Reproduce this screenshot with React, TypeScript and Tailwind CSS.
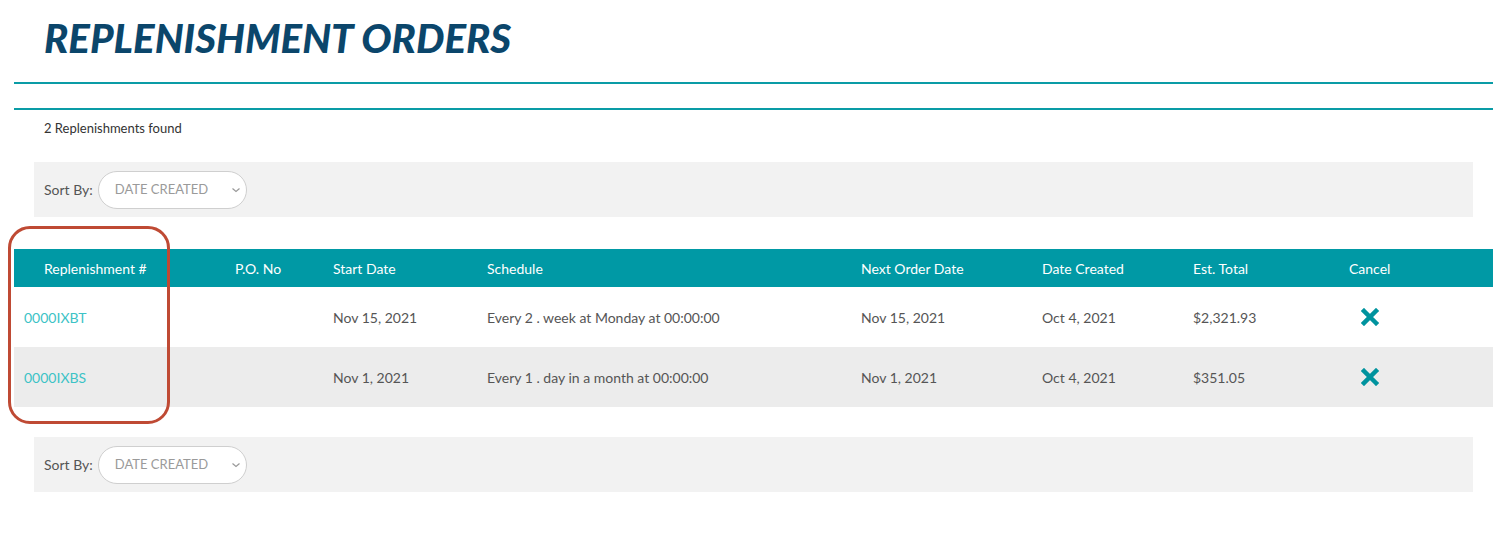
import React from "react";

const rows = [
  { id: "0000IXBT", po: "", start: "Nov 15, 2021", schedule: "Every 2 . week at Monday at 00:00:00", next: "Nov 15, 2021", created: "Oct 4, 2021", total: "$2,321.93" },
  { id: "0000IXBS", po: "", start: "Nov 1, 2021", schedule: "Every 1 . day in a month at 00:00:00", next: "Nov 1, 2021", created: "Oct 4, 2021", total: "$351.05" },
];

function SortBar() {
  return (
    <div className="mx-[20px] h-[55px] bg-[#f2f2f2] flex items-center pl-[10px] gap-[5px]">
      <span className="text-[14px] text-[#555]">Sort By:</span>
      <div className="w-[149px] h-[38px] rounded-full border border-[#cfcfcf] bg-white flex items-center justify-between pl-[16px] pr-[4px]">
        <span className="text-[13px] text-[#9a9a9a] uppercase">Date Created</span>
        <svg width="12" height="10" viewBox="0 0 12 10" fill="none" stroke="#999" strokeWidth="1.2"><path d="M2.5 3.5 L6 6.5 L9.5 3.5" /></svg>
      </div>
    </div>
  );
}

function XIcon() {
  return (
    <svg width="18" height="18" viewBox="0 0 18 18">
      <path d="M3 3 L15 15 M15 3 L3 15" stroke="#00939e" strokeWidth="4.5" strokeLinecap="square" />
    </svg>
  );
}

export default function App() {
  return (
    <div className="bg-white w-[1505px] h-[535px] relative" style={{ fontFamily: "Lato, 'Open Sans', sans-serif" }}>
      <div className="pl-[14px] w-[1493px]">
        <h1 className="pl-[30px] pt-[14px] h-[82px] text-[40.2px] leading-[48px] font-black italic text-[#0b466b] tracking-[0px]">REPLENISHMENT ORDERS</h1>
        <div className="h-[2px] bg-[#0a9ca6]" />
        <div className="h-[24px]" />
        <div className="h-[2px] bg-[#0a9ca6]" />
        <div className="pl-[30px] h-[52px] pt-[10px] text-[13px] leading-[16px] text-[#333]">2 Replenishments found</div>
        <SortBar />
        <div className="h-[32px]" />
        <div className="w-[1479px]">
          <div className="h-[38px] bg-[#0099a5] flex items-center text-[14px] text-white">
            <div className="w-[221px] pl-[30px]">Replenishment #</div>
            <div className="w-[98px]">P.O. No</div>
            <div className="w-[154px]">Start Date</div>
            <div className="w-[374px]">Schedule</div>
            <div className="w-[181px]">Next Order Date</div>
            <div className="w-[151px]">Date Created</div>
            <div className="w-[156px]">Est. Total</div>
            <div>Cancel</div>
          </div>
          {rows.map((r, i) => (
            <div key={r.id} className={`h-[60px] flex items-center text-[14px] text-[#555] ${i % 2 === 1 ? "bg-[#ececec]" : "bg-white"}`}>
              <div className="w-[221px] pl-[10px] text-[#3cc3c6]">{r.id}</div>
              <div className="w-[98px]">{r.po}</div>
              <div className="w-[154px]">{r.start}</div>
              <div className="w-[374px]">{r.schedule}</div>
              <div className="w-[181px]">{r.next}</div>
              <div className="w-[151px]">{r.created}</div>
              <div className="w-[156px]">{r.total}</div>
              <div className="w-[42px] flex justify-center"><XIcon /></div>
            </div>
          ))}
        </div>
        <div className="h-[30px]" />
        <SortBar />
      </div>
      <div className="absolute left-[8px] top-[226px] w-[162px] h-[198px] rounded-[22px] border-[3px] border-[#bf4a34]" />
    </div>
  );
}
